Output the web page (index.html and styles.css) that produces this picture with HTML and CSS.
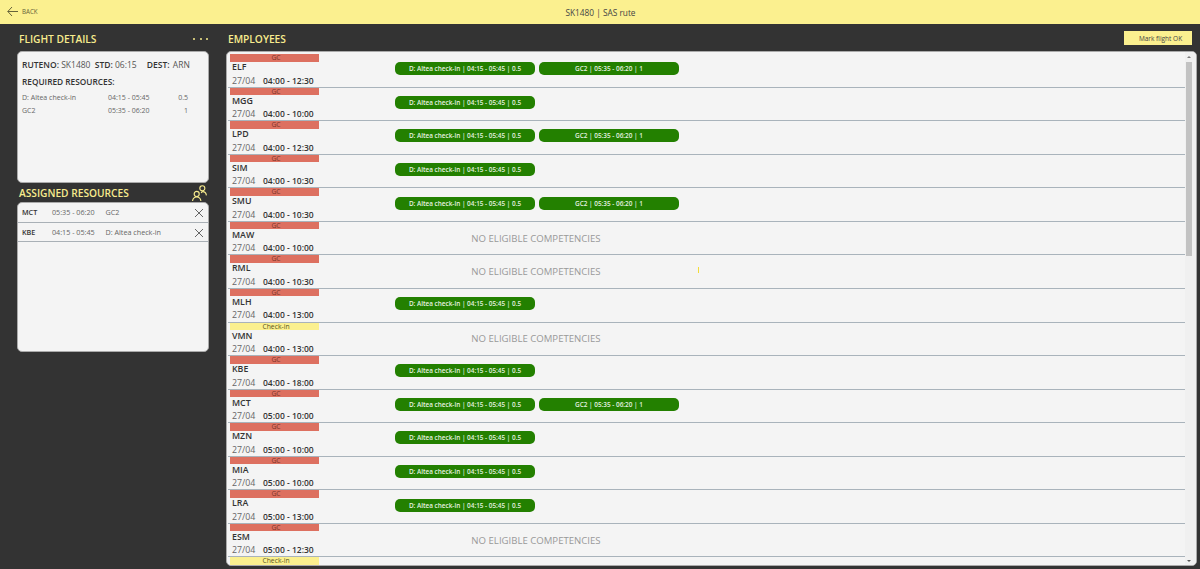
FILE: index.html
```html
<!DOCTYPE html>
<html>
<head>
<meta charset="utf-8">
<title>SK1480 | SAS rute</title>
<link rel="stylesheet" href="styles.css">
</head>
<body>
<div class="topbar">
	<a class="back">
		<svg width="11" height="11" viewBox="0 0 11 11"><path d="M5 1 .8 5.500 5 10M.8 5.500H11" fill="none" stroke="#66633a" stroke-width="1"/></svg>
		<span>BACK</span>
	</a>
	<div class="title">SK1480 | SAS rute</div>
</div>
<div class="main">
	<div class="left">
		<div class="head"><h2>FLIGHT DETAILS</h2><span class="dots"><i></i><i></i><i></i></span></div>
		<div class="box details">
			<p class="info"><b>RUTENO:</b> SK1480 <b class="gap">STD:</b> 06:15 <b class="gap2">DEST:</b> <span class="dest">ARN</span></p>
			<p class="req"><b>REQUIRED RESOURCES:</b></p>
			<div class="res"><span class="r1">D: Altea check-in</span><span class="r2">04:15 - 05:45</span><span class="r3">0.5</span></div>
			<div class="res"><span class="r1">GC2</span><span class="r2">05:35 - 06:20</span><span class="r3">1</span></div>
		</div>
		<div class="head head2"><h2>ASSIGNED RESOURCES</h2>
			<svg width="15" height="16" viewBox="0 0 16 17" fill="none" stroke="#f8ec8e" stroke-width="1.200"><circle cx="11" cy="3.500" r="2.700"/><circle cx="5" cy="9.500" r="2.700"/><path d="M.6 17c.3-2.800 2-4.300 4.400-4.300S9.200 14.200 9.500 17M9.800 8.500c.4-1 1-1.500 1.700-1.500 2 0 3.400 1.300 3.900 4"/></svg>
		</div>
		<div class="box assigned">
			<div class="asg"><b>MCT</b><span class="t">05:35 - 06:20</span><span class="n">GC2</span>
				<svg class="x" width="10" height="10" viewBox="0 0 10 10"><path d="M1 1l8 8M9 1l-8 8" stroke="#666" stroke-width="1"/></svg></div>
			<div class="asg"><b>KBE</b><span class="t">04:15 - 05:45</span><span class="n">D: Altea check-in</span>
				<svg class="x" width="10" height="10" viewBox="0 0 10 10"><path d="M1 1l8 8M9 1l-8 8" stroke="#666" stroke-width="1"/></svg></div>
		</div>
	</div>
	<div class="right">
		<div class="head headr"><h2>EMPLOYEES</h2><button class="ok">Mark flight OK</button></div>
		<div class="box emps">
			<div class="list">
				<div class="emp"><div class="who"><div class="tag gc">GC</div><div class="code">ELF</div><div class="when"><span>27/04</span><b>04:00 - 12:30</b></div></div><div class="pills"><span class="pill">D: Altea check-in | 04:15 - 05:45 | 0.5</span><span class="pill">GC2 | 05:35 - 06:20 | 1</span></div></div>
				<div class="emp"><div class="who"><div class="tag gc">GC</div><div class="code">MGG</div><div class="when"><span>27/04</span><b>04:00 - 10:00</b></div></div><div class="pills"><span class="pill">D: Altea check-in | 04:15 - 05:45 | 0.5</span></div></div>
				<div class="emp"><div class="who"><div class="tag gc">GC</div><div class="code">LPD</div><div class="when"><span>27/04</span><b>04:00 - 12:30</b></div></div><div class="pills"><span class="pill">D: Altea check-in | 04:15 - 05:45 | 0.5</span><span class="pill">GC2 | 05:35 - 06:20 | 1</span></div></div>
				<div class="emp"><div class="who"><div class="tag gc">GC</div><div class="code">SIM</div><div class="when"><span>27/04</span><b>04:00 - 10:30</b></div></div><div class="pills"><span class="pill">D: Altea check-in | 04:15 - 05:45 | 0.5</span></div></div>
				<div class="emp"><div class="who"><div class="tag gc">GC</div><div class="code">SMU</div><div class="when"><span>27/04</span><b>04:00 - 10:30</b></div></div><div class="pills"><span class="pill">D: Altea check-in | 04:15 - 05:45 | 0.5</span><span class="pill">GC2 | 05:35 - 06:20 | 1</span></div></div>
				<div class="emp"><div class="who"><div class="tag gc">GC</div><div class="code">MAW</div><div class="when"><span>27/04</span><b>04:00 - 10:00</b></div></div><div class="none">NO ELIGIBLE COMPETENCIES</div></div>
				<div class="emp"><div class="who"><div class="tag gc">GC</div><div class="code">RML</div><div class="when"><span>27/04</span><b>04:00 - 10:30</b></div></div><div class="none">NO ELIGIBLE COMPETENCIES</div><i class="cursor"></i></div>
				<div class="emp"><div class="who"><div class="tag gc">GC</div><div class="code">MLH</div><div class="when"><span>27/04</span><b>04:00 - 13:00</b></div></div><div class="pills"><span class="pill">D: Altea check-in | 04:15 - 05:45 | 0.5</span></div></div>
				<div class="emp"><div class="who"><div class="tag chk">Check-in</div><div class="code">VMN</div><div class="when"><span>27/04</span><b>04:00 - 13:00</b></div></div><div class="none">NO ELIGIBLE COMPETENCIES</div></div>
				<div class="emp"><div class="who"><div class="tag gc">GC</div><div class="code">KBE</div><div class="when"><span>27/04</span><b>04:00 - 18:00</b></div></div><div class="pills"><span class="pill">D: Altea check-in | 04:15 - 05:45 | 0.5</span></div></div>
				<div class="emp"><div class="who"><div class="tag gc">GC</div><div class="code">MCT</div><div class="when"><span>27/04</span><b>05:00 - 10:00</b></div></div><div class="pills"><span class="pill">D: Altea check-in | 04:15 - 05:45 | 0.5</span><span class="pill">GC2 | 05:35 - 06:20 | 1</span></div></div>
				<div class="emp"><div class="who"><div class="tag gc">GC</div><div class="code">MZN</div><div class="when"><span>27/04</span><b>05:00 - 10:00</b></div></div><div class="pills"><span class="pill">D: Altea check-in | 04:15 - 05:45 | 0.5</span></div></div>
				<div class="emp"><div class="who"><div class="tag gc">GC</div><div class="code">MIA</div><div class="when"><span>27/04</span><b>05:00 - 10:00</b></div></div><div class="pills"><span class="pill">D: Altea check-in | 04:15 - 05:45 | 0.5</span></div></div>
				<div class="emp"><div class="who"><div class="tag gc">GC</div><div class="code">LRA</div><div class="when"><span>27/04</span><b>05:00 - 13:00</b></div></div><div class="pills"><span class="pill">D: Altea check-in | 04:15 - 05:45 | 0.5</span></div></div>
				<div class="emp"><div class="who"><div class="tag gc">GC</div><div class="code">ESM</div><div class="when"><span>27/04</span><b>05:00 - 12:30</b></div></div><div class="none">NO ELIGIBLE COMPETENCIES</div></div>
				<div class="emp"><div class="who"><div class="tag chk">Check-in</div></div></div>
			</div>
			<div class="scroll"><span class="up"></span><div class="thumb"></div><span class="down"></span></div>
		</div>
	</div>
</div>
</body>
</html>
```
FILE: styles.css
```css
*{ margin:0; padding:0; box-sizing:border-box;}
html,body{ height:100%; overflow:hidden;}
body{ background:#333; font-family:"Open Sans","Noto Sans",sans-serif; color:#333; font-size:8px;}
b{ font-weight:600;}

.topbar{ height:24px; background:#fbf08f; display:flex; align-items:center; justify-content:center; position:relative; color:#444;}
.back{ position:absolute; left:7px; top:6px; display:flex; align-items:center; gap:4px; font-size:6.200px; color:#66633a;}
.title{ font-size:8.300px; padding-left:1px;}

.main{ display:flex; height:545px; padding-left:17px;}
.left{ width:192px; flex:none;}
.right{ width:971px; margin-left:17px; flex:none;}

.head{ height:27px; display:flex; align-items:center; justify-content:space-between;}
.head h2{ font-size:10.200px; font-weight:600; color:#f8ec8e; padding-left:2px; margin-top:2px;}
.dots{ display:flex; gap:4.500px; padding-right:1px; margin-top:2px;}
.dots i{ width:2px; height:2px; border-radius:50%; background:#f8ec8e;}
.head2{ height:19px;}
.head2 h2{ margin-top:0;}
.head2 svg{ margin-right:2px;}
.headr{ padding-right:5px;}
.headr h2{ padding-left:0; margin-left:2px;}
.ok{ width:68px; height:14px; background:#fbf08f; border:0; font:6.500px "Open Sans",sans-serif; color:#444; margin-top:1px; padding-left:5px;}

.box{ background:#f4f4f4; border:1px solid #aaa; border-radius:5px;}
.details{ height:132px; padding:7px 4px;}
.info{ font-size:8.500px; line-height:12px; white-space:nowrap; color:#555;}
.info b{ color:#333;}
.gap{ margin-left:2px;}
.gap2{ margin-left:8px;}
.dest{ margin-left:1px;}
.req{ font-size:8.300px; line-height:12px; margin-top:5px; margin-bottom:4px;}
.res{ display:flex; height:12.500px; line-height:12.500px; font-size:7px; color:#666;}
.r1{ width:86px;}
.r2{ width:70px;}
.r3{ width:10px; text-align:right;}

.assigned{ height:150px;}
.asg{ height:19.500px; display:flex; align-items:center; border-bottom:1px solid #a9b0b6; padding-left:4px; position:relative; font-size:7.200px; color:#666;}
.asg b{ width:30px; font-size:7.200px; color:#333;}
.asg .t{ width:53.500px;}
.x{ position:absolute; right:4px; top:5px;}

.emps{ height:515px; display:flex; overflow:hidden; position:relative; padding-left:1px;}
.list{ flex:1; height:100%; overflow:hidden; padding-top:2px;}
.emp{ height:33.570px; border-bottom:1.500px solid #a9b3bb; position:relative; display:flex; align-items:center;}
.who{ width:167px; align-self:flex-start; flex:none;}
.tag{ width:89px; height:7.500px; margin-left:2px; padding-left:3px; font-size:6.800px; line-height:7.500px; text-align:center;}
.gc{ background:#dd7060; color:#7a3328;}
.chk{ background:#fbf08f; color:#5a5520;}
.code{ font-size:8.800px; font-weight:600; line-height:11px; margin:0.500px 0 0 4px;}
.when{ display:flex; align-items:baseline; font-size:8.800px; line-height:11px; margin:1.500px 0 0 4px; color:#666;}
.when span{ width:31px;}
.when b{ color:#333; font-size:8.500px;}
.pills{ display:flex; gap:4px; margin-top:-3px;}
.pill{ width:140px; height:13px; border-radius:5px; background:#238000; color:#e6f2e0; font-size:6.400px; font-weight:600; line-height:13px; text-align:center;}
.none{ width:282px; text-align:center; font-size:9.600px; color:#999;}
.cursor{ position:absolute; left:470px; top:12px; width:1px; height:6px; background:#f2dc3a;}

.scroll{ width:11px; flex:none; background:#f0f0f0; position:relative;}
.thumb{ width:6px; height:194px; margin:10px 0 0 1px; background:#c2c2c2;}
.up,.down{ position:absolute; left:2px; width:0; height:0; border:2px solid transparent;}
.up{ top:2px; border-bottom-color:#777;}
.down{ bottom:1px; border-top-color:#555;}
```
